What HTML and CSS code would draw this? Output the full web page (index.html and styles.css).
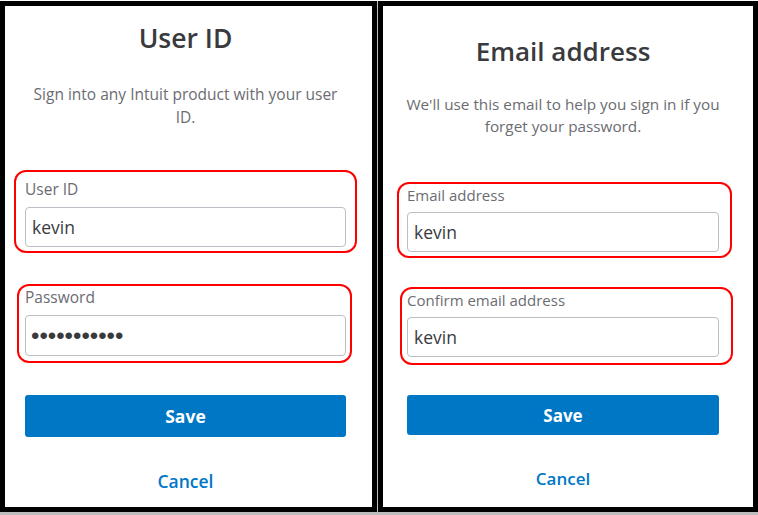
FILE: index.html
```html
<!DOCTYPE html>
<html lang="en">
<head>
<meta charset="utf-8">
<title>Intuit account settings</title>
<link rel="stylesheet" href="styles.css">
</head>
<body>
<div class="screen">
  <section class="panel panel--left">
    <h1 class="title">User ID</h1>
    <p class="lead">Sign into any Intuit product with your user ID.</p>
    <div class="field field--a">
      <label class="field-label" for="uid">User ID</label>
      <input class="field-input" id="uid" type="text" value="kevin" readonly>
    </div>
    <div class="field field--b">
      <label class="field-label" for="pwd">Password</label>
      <input class="field-input field-input--secret" id="pwd" type="password" value="secretpass1" readonly>
    </div>
    <button class="btn-save" type="button">Save</button>
    <a class="btn-cancel" href="#">Cancel</a>
  </section>
  <section class="panel panel--right">
    <h1 class="title">Email address</h1>
    <p class="lead">We'll use this email to help you sign in if you forget your password.</p>
    <div class="field field--c">
      <label class="field-label" for="email">Email address</label>
      <input class="field-input" id="email" type="text" value="kevin" readonly>
    </div>
    <div class="field field--d">
      <label class="field-label" for="email2">Confirm email address</label>
      <input class="field-input" id="email2" type="text" value="kevin" readonly>
    </div>
    <button class="btn-save" type="button">Save</button>
    <a class="btn-cancel" href="#">Cancel</a>
  </section>
</div>
</body>
</html>
```
FILE: styles.css
```css
* { box-sizing: border-box; }

html, body {
  margin: 0;
  padding: 0;
  background: #ffffff;
}

body {
  font-family: "Open Sans", "Lato", sans-serif;
  color: #393a3d;
}

.screen {
  margin-top: 1px;
  display: flex;
  gap: 1px;
  padding-bottom: 3px;
  background: #bdbdbd;
  width: 758px;
}

.panel {
  height: 511px;
  border: 5px solid #000;
  background: #fff;
  display: flex;
  flex-direction: column;
}

.panel--left {
  width: 377px;
  padding: 15px 26px 0 20px;
}

.panel--right {
  width: 380px;
  padding: 29px 34px 0 24px;
}

.title {
  margin: 0;
  text-align: center;
  font-weight: 600;
  color: #393a3d;
}

.panel--left .title { font-size: 26.5px; line-height: 34px; }
.panel--right .title { font-size: 26px; line-height: 32px; }

.lead {
  margin: 0;
  text-align: center;
  color: #6b6c72;
}

.panel--left .lead {
  font-size: 15.5px;
  line-height: 23px;
  margin-top: 28px;
  padding: 0 4px;
}

.panel--right .lead {
  font-size: 15.3px;
  line-height: 22px;
  margin: 26px -6px 0;
}

.field {
  position: relative;
  display: flex;
  flex-direction: column;
}

.field::before {
  content: "";
  position: absolute;
  border: 2px solid #ff0000;
  border-radius: 12px;
  pointer-events: none;
}

.field--a { margin-top: 50px; }
.field--a::before { top: -9px; right: -11px; bottom: -6px; left: -11px; }
.field--b { margin-top: 40px; }
.field--b::before { top: -3px; right: -6px; bottom: -7px; left: -8px; }
.field--c { margin-top: 49px; }
.field--c::before { top: -4px; right: -13px; bottom: -6px; left: -10px; }
.field--d { margin-top: 39px; }
.field--d::before { top: -4px; right: -14px; bottom: -8px; left: -7px; }

.field-label {
  color: #6b6c72;
}

.panel--left .field-label { font-size: 15.5px; line-height: 20px; margin-bottom: 8px; }
.panel--right .field-label { font-size: 15px; line-height: 19px; margin-bottom: 7px; }

.field-input {
  display: block;
  width: 100%;
  height: 40px;
  margin: 0;
  padding: 0 6px;
  border: 1px solid #babec5;
  border-radius: 4px;
  background: #fff;
  font-family: "Open Sans", "Lato", sans-serif;
  font-size: 17.5px;
  color: #393a3d;
  outline: none;
}

.field--b .field-input { height: 41px; }

.field-input--secret {
  font-family: "Liberation Sans", Arial, sans-serif;
  font-size: 24px;
  letter-spacing: 0;
  padding-left: 5px;
}

.btn-save {
  display: block;
  width: 100%;
  border: 0;
  border-radius: 3px;
  background: #0077c5;
  color: #fff;
  font-family: "Open Sans", "Lato", sans-serif;
  font-weight: 700;
  padding: 0;
}

.panel--left .btn-save { margin-top: 39px; height: 42px; font-size: 17.5px; }
.panel--right .btn-save { margin-top: 38px; height: 40px; font-size: 17px; }

.btn-cancel {
  display: block;
  text-align: center;
  color: #0077c5;
  font-weight: 600;
  text-decoration: none;
}

.panel--left .btn-cancel { margin-top: 32px; font-size: 17.5px; line-height: 24px; }
.panel--right .btn-cancel { margin-top: 33px; font-size: 17px; line-height: 22px; }
```
